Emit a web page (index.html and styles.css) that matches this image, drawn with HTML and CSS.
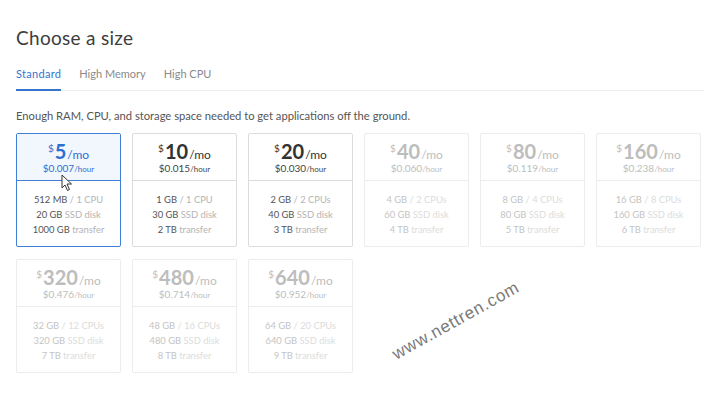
FILE: index.html
```html
<!DOCTYPE html>
<html>
<head>
<meta charset="utf-8">
<link rel="stylesheet" href="styles.css">
</head>
<body>
<div class="page">
  <h1 class="title">Choose a size</h1>
  <div class="tabs">
    <span class="tab active">Standard</span>
    <span class="tab">High Memory</span>
    <span class="tab">High CPU</span>
  </div>
  <p class="desc">Enough RAM, CPU, and storage space needed to get applications off the ground.</p>
  <div class="grid">
    <div class="card selected">
      <div class="top"><div class="price"><span class="cur">$</span><span class="amt">5</span><span class="per">/mo</span></div><div class="hour">$0.007<span class="hu">/hour</span></div></div>
      <div class="specs"><div><b>512 MB</b> / 1 CPU</div><div><b>20 GB</b> SSD disk</div><div><b>1000 GB</b> transfer</div></div>
    </div>
    <div class="card">
      <div class="top"><div class="price"><span class="cur">$</span><span class="amt">10</span><span class="per">/mo</span></div><div class="hour">$0.015<span class="hu">/hour</span></div></div>
      <div class="specs"><div><b>1 GB</b> / 1 CPU</div><div><b>30 GB</b> SSD disk</div><div><b>2 TB</b> transfer</div></div>
    </div>
    <div class="card">
      <div class="top"><div class="price"><span class="cur">$</span><span class="amt">20</span><span class="per">/mo</span></div><div class="hour">$0.030<span class="hu">/hour</span></div></div>
      <div class="specs"><div><b>2 GB</b> / 2 CPUs</div><div><b>40 GB</b> SSD disk</div><div><b>3 TB</b> transfer</div></div>
    </div>
    <div class="card disabled">
      <div class="top"><div class="price"><span class="cur">$</span><span class="amt">40</span><span class="per">/mo</span></div><div class="hour">$0.060<span class="hu">/hour</span></div></div>
      <div class="specs"><div><b>4 GB</b> / 2 CPUs</div><div><b>60 GB</b> SSD disk</div><div><b>4 TB</b> transfer</div></div>
    </div>
    <div class="card disabled">
      <div class="top"><div class="price"><span class="cur">$</span><span class="amt">80</span><span class="per">/mo</span></div><div class="hour">$0.119<span class="hu">/hour</span></div></div>
      <div class="specs"><div><b>8 GB</b> / 4 CPUs</div><div><b>80 GB</b> SSD disk</div><div><b>5 TB</b> transfer</div></div>
    </div>
    <div class="card disabled">
      <div class="top"><div class="price"><span class="cur">$</span><span class="amt">160</span><span class="per">/mo</span></div><div class="hour">$0.238<span class="hu">/hour</span></div></div>
      <div class="specs"><div><b>16 GB</b> / 8 CPUs</div><div><b>160 GB</b> SSD disk</div><div><b>6 TB</b> transfer</div></div>
    </div>
    <div class="card disabled">
      <div class="top"><div class="price"><span class="cur">$</span><span class="amt">320</span><span class="per">/mo</span></div><div class="hour">$0.476<span class="hu">/hour</span></div></div>
      <div class="specs"><div><b>32 GB</b> / 12 CPUs</div><div><b>320 GB</b> SSD disk</div><div><b>7 TB</b> transfer</div></div>
    </div>
    <div class="card disabled">
      <div class="top"><div class="price"><span class="cur">$</span><span class="amt">480</span><span class="per">/mo</span></div><div class="hour">$0.714<span class="hu">/hour</span></div></div>
      <div class="specs"><div><b>48 GB</b> / 16 CPUs</div><div><b>480 GB</b> SSD disk</div><div><b>8 TB</b> transfer</div></div>
    </div>
    <div class="card disabled">
      <div class="top"><div class="price"><span class="cur">$</span><span class="amt">640</span><span class="per">/mo</span></div><div class="hour">$0.952<span class="hu">/hour</span></div></div>
      <div class="specs"><div><b>64 GB</b> / 20 CPUs</div><div><b>640 GB</b> SSD disk</div><div><b>9 TB</b> transfer</div></div>
    </div>
  </div>
  <svg class="cursor" width="12" height="18" viewBox="0 0 12 18"><path d="M1 1 L1 14 L4 11 L6.5 16.5 L8.5 15.5 L6 10 L10.5 10 Z" fill="#fff" stroke="#333" stroke-width="1" stroke-linejoin="round"/></svg>
  <div class="watermark">www.nettren.com</div>
</div>
</body>
</html>
```

FILE: styles.css
```css
html, body { margin: 0; padding: 0; background: #fff; }
body { font-family: Lato, "Open Sans", sans-serif; color: #444; }
.page { position: relative; width: 720px; height: 400px; padding: 0 16px; box-sizing: border-box; overflow: hidden; }
.title { margin: 0; padding-top: 26px; font-size: 19px; font-weight: 400; line-height: 24px; color: #3d3d3d; letter-spacing: 0.3px; }
.tabs { display: flex; gap: 18px; margin-top: 12px; border-bottom: 1px solid #ececec; height: 29px; box-sizing: border-box; }
.tab { font-size: 11px; line-height: 14px; padding-top: 5px; color: #8a8a8a; height: 28px; box-sizing: border-box; }
.tab.active { color: #3473d0; border-bottom: 2px solid #3473d0; height: 29px; margin-bottom: -1px; letter-spacing: 0.3px; }
.desc { margin: 18px 0 0; font-size: 11.2px; line-height: 14px; color: #555; }
.grid { display: grid; grid-template-columns: repeat(6, 105px); column-gap: 11px; row-gap: 12px; margin-top: 10px; }
.card { height: 114px; border: 1px solid #dcdcdc; border-radius: 2px; box-sizing: border-box; text-align: center; display: flex; flex-direction: column; }
.top { height: 47px; border-bottom: 1px solid #dcdcdc; box-sizing: border-box; padding-top: 6px; }
.price { line-height: 22px; height: 22px; color: #333; }
.cur { font-size: 10px; line-height: 10px; vertical-align: 7px; margin-right: 1px; }
.amt { font-size: 20px; font-weight: 700; }
.per { font-size: 12px; margin-left: 1px; }
.hour { font-size: 10px; line-height: 12px; margin-top: 0; color: #444; }
.hu { font-size: 8px; }
.specs { padding-top: 11px; font-size: 9.4px; line-height: 15px; color: #b4b4b4; }
.specs b { font-weight: 400; color: #555; }
.card.selected { border-color: #3f80d6; }
.card.selected .top { background: #f2f7fd; border-bottom-color: #3f80d6; }
.card.selected .price, .card.selected .hour { color: #2e6ed0; }
.card.disabled { border-color: #ececec; }
.card.disabled .top { border-bottom-color: #ececec; }
.card.disabled .price, .card.disabled .hour { color: #bdbdbd; }
.card.disabled .specs { color: #dcdcdc; }
.card.disabled .specs b { color: #c4c4c4; }
.cursor { position: absolute; left: 61px; top: 174px; }
.watermark { position: absolute; left: 456px; top: 321px; font-family: "Liberation Sans", Arial, sans-serif; font-size: 17px; line-height: 20px; color: #7a7a7a; transform: translate(-50%, -50%) rotate(-29deg); letter-spacing: 0.8px; white-space: nowrap; }
```
